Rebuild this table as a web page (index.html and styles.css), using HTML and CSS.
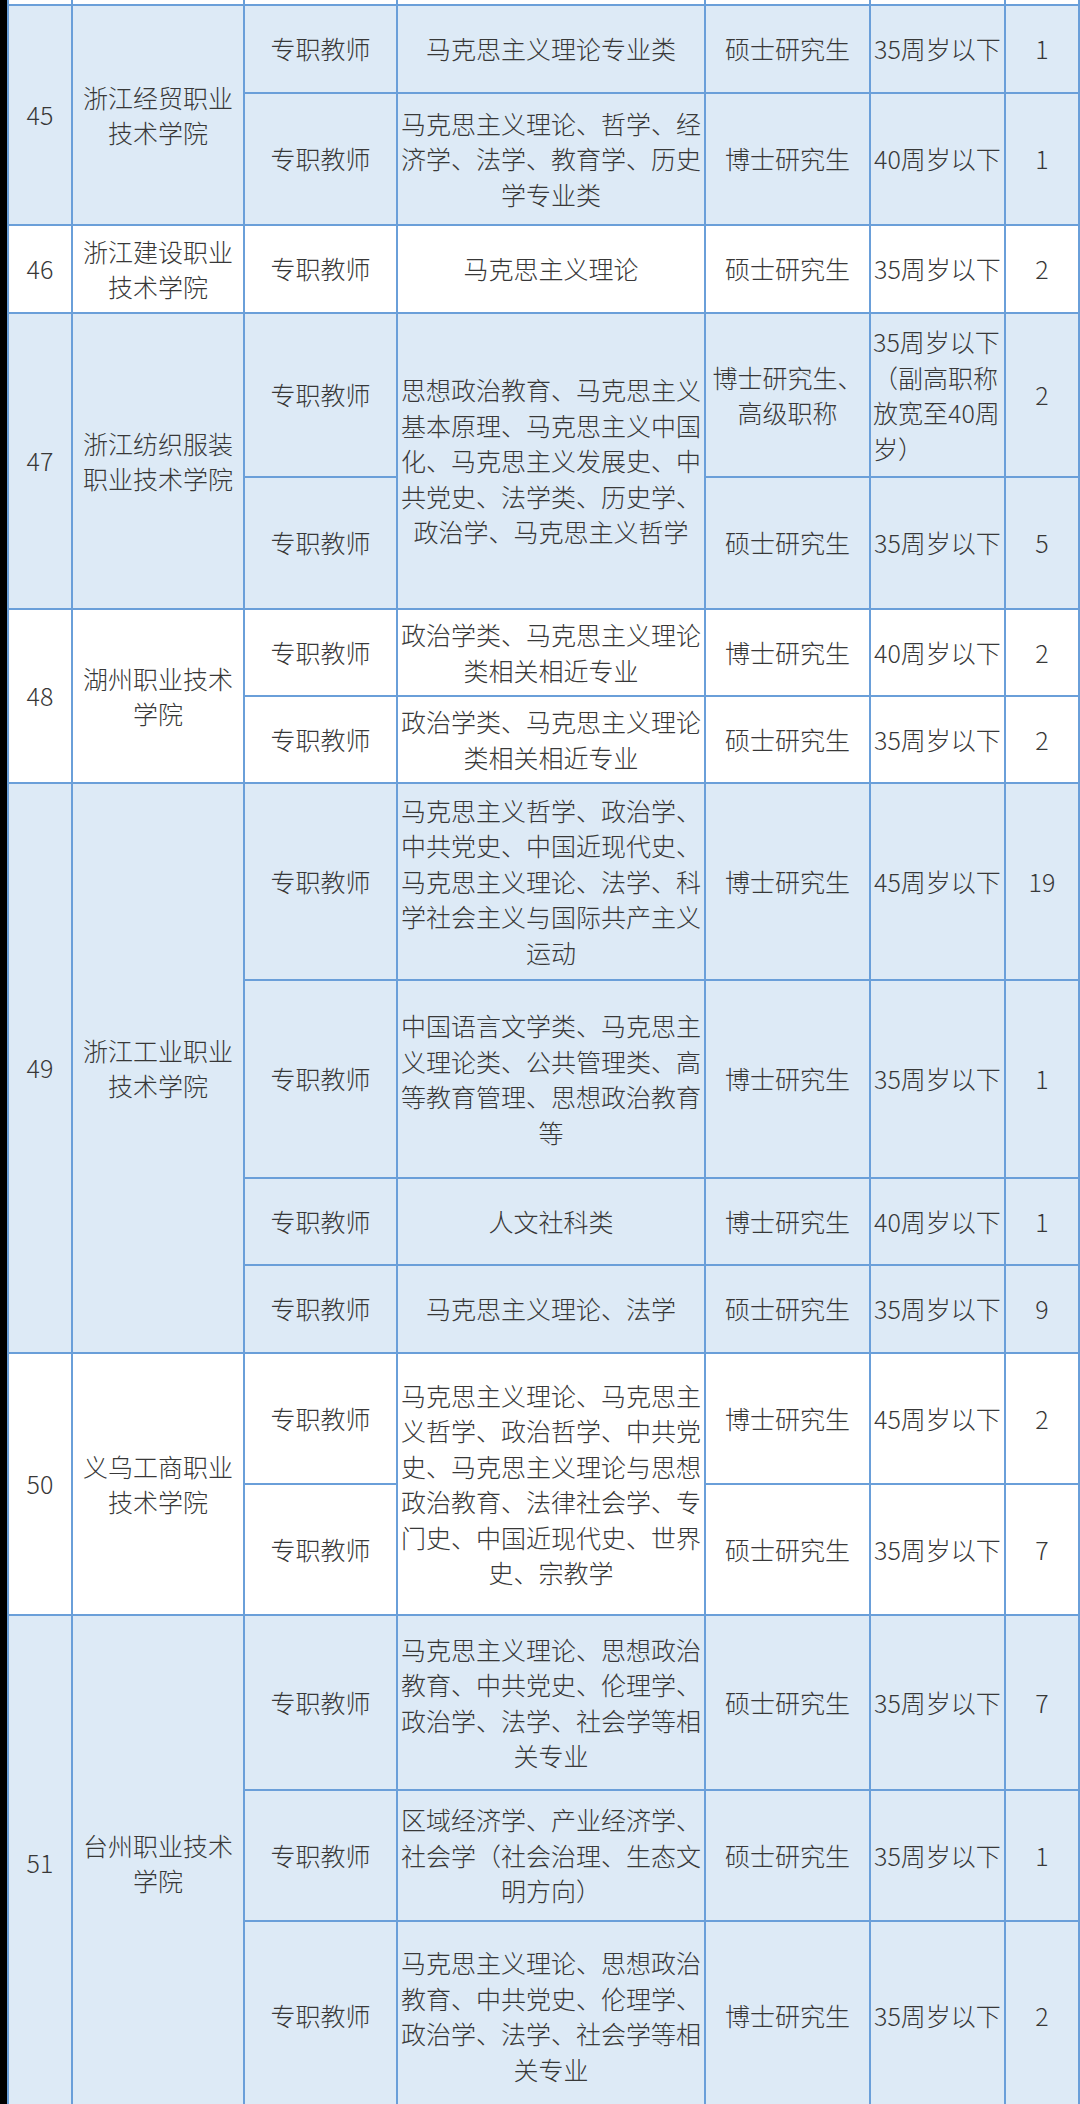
FILE: index.html
```html
<!DOCTYPE html>
<html lang="zh-CN">
<head>
<meta charset="utf-8">
<title>招聘岗位表</title>
<link rel="stylesheet" href="styles.css">
</head>
<body>
<div class="sheet">
  <div class="grid">
    <!-- tail of row 44 -->
    <div class="c w"></div><div class="c w"></div><div class="c w"></div><div class="c w"></div><div class="c w"></div><div class="c w"></div><div class="c w"></div>

    <!-- 45 -->
    <div class="c b r2">45</div>
    <div class="c b r2">浙江经贸职业技术学院</div>
    <div class="c b">专职教师</div>
    <div class="c b">马克思主义理论专业类</div>
    <div class="c b">硕士研究生</div>
    <div class="c b age">35周岁以下</div>
    <div class="c b">1</div>
    <div class="c b">专职教师</div>
    <div class="c b">马克思主义理论、哲学、经济学、法学、教育学、历史学专业类</div>
    <div class="c b">博士研究生</div>
    <div class="c b age">40周岁以下</div>
    <div class="c b">1</div>

    <!-- 46 -->
    <div class="c w">46</div>
    <div class="c w">浙江建设职业技术学院</div>
    <div class="c w">专职教师</div>
    <div class="c w">马克思主义理论</div>
    <div class="c w">硕士研究生</div>
    <div class="c w age">35周岁以下</div>
    <div class="c w">2</div>

    <!-- 47 -->
    <div class="c b r2">47</div>
    <div class="c b r2">浙江纺织服装职业技术学院</div>
    <div class="c b">专职教师</div>
    <div class="c b r2">思想政治教育、马克思主义基本原理、马克思主义中国化、马克思主义发展史、中共党史、法学类、历史学、政治学、马克思主义哲学</div>
    <div class="c b">博士研究生、高级职称</div>
    <div class="c b age left">35周岁以下（副高职称放宽至40周岁）</div>
    <div class="c b">2</div>
    <div class="c b">专职教师</div>
    <div class="c b">硕士研究生</div>
    <div class="c b age">35周岁以下</div>
    <div class="c b">5</div>

    <!-- 48 -->
    <div class="c w r2">48</div>
    <div class="c w r2">湖州职业技术学院</div>
    <div class="c w">专职教师</div>
    <div class="c w">政治学类、马克思主义理论类相关相近专业</div>
    <div class="c w">博士研究生</div>
    <div class="c w age">40周岁以下</div>
    <div class="c w">2</div>
    <div class="c w">专职教师</div>
    <div class="c w">政治学类、马克思主义理论类相关相近专业</div>
    <div class="c w">硕士研究生</div>
    <div class="c w age">35周岁以下</div>
    <div class="c w">2</div>

    <!-- 49 -->
    <div class="c b r4">49</div>
    <div class="c b r4">浙江工业职业技术学院</div>
    <div class="c b">专职教师</div>
    <div class="c b">马克思主义哲学、政治学、中共党史、中国近现代史、马克思主义理论、法学、科学社会主义与国际共产主义运动</div>
    <div class="c b">博士研究生</div>
    <div class="c b age">45周岁以下</div>
    <div class="c b">19</div>
    <div class="c b">专职教师</div>
    <div class="c b">中国语言文学类、马克思主义理论类、公共管理类、高等教育管理、思想政治教育等</div>
    <div class="c b">博士研究生</div>
    <div class="c b age">35周岁以下</div>
    <div class="c b">1</div>
    <div class="c b">专职教师</div>
    <div class="c b">人文社科类</div>
    <div class="c b">博士研究生</div>
    <div class="c b age">40周岁以下</div>
    <div class="c b">1</div>
    <div class="c b">专职教师</div>
    <div class="c b">马克思主义理论、法学</div>
    <div class="c b">硕士研究生</div>
    <div class="c b age">35周岁以下</div>
    <div class="c b">9</div>

    <!-- 50 -->
    <div class="c w r2">50</div>
    <div class="c w r2">义乌工商职业技术学院</div>
    <div class="c w">专职教师</div>
    <div class="c w r2">马克思主义理论、马克思主义哲学、政治哲学、中共党史、马克思主义理论与思想政治教育、法律社会学、专门史、中国近现代史、世界史、宗教学</div>
    <div class="c w">博士研究生</div>
    <div class="c w age">45周岁以下</div>
    <div class="c w">2</div>
    <div class="c w">专职教师</div>
    <div class="c w">硕士研究生</div>
    <div class="c w age">35周岁以下</div>
    <div class="c w">7</div>

    <!-- 51 -->
    <div class="c b r3">51</div>
    <div class="c b r3">台州职业技术学院</div>
    <div class="c b">专职教师</div>
    <div class="c b">马克思主义理论、思想政治教育、中共党史、伦理学、政治学、法学、社会学等相关专业</div>
    <div class="c b">硕士研究生</div>
    <div class="c b age">35周岁以下</div>
    <div class="c b">7</div>
    <div class="c b">专职教师</div>
    <div class="c b">区域经济学、产业经济学、社会学（社会治理、生态文明方向）</div>
    <div class="c b">硕士研究生</div>
    <div class="c b age">35周岁以下</div>
    <div class="c b">1</div>
    <div class="c b">专职教师</div>
    <div class="c b">马克思主义理论、思想政治教育、中共党史、伦理学、政治学、法学、社会学等相关专业</div>
    <div class="c b">博士研究生</div>
    <div class="c b age">35周岁以下</div>
    <div class="c b">2</div>
  </div>
</div>
</body>
</html>
```

FILE: styles.css
```css
html, body {
  margin: 0;
  padding: 0;
}

body {
  background: #000;
  font-family: "Noto Sans CJK SC", "Noto Sans", sans-serif;
  font-size: 25px;
  font-weight: 300;
  line-height: 35.5px;
  color: #383838;
}

.sheet {
  padding-left: 7px;
}

.grid {
  display: grid;
  background: #6a9fd9;
  gap: 2px;
  padding: 0 2px 2px 2px;
  grid-template-columns: 62px 170px 151px 306px 163px 133px 72px;
  grid-template-rows:
    4px 86px 130px 86px 162px 130px 85px 85px
    195px 196px 85px 86px 129px 129px 173px 129px 188px;
}

.c {
  display: flex;
  align-items: center;
  justify-content: center;
  text-align: center;
  padding: 0 2px;
  overflow: hidden;
  min-width: 0;
}

.b {
  background: #ddeaf6;
}

.w {
  background: #ffffff;
}

.r2 { grid-row: span 2; }
.r3 { grid-row: span 3; }
.r4 { grid-row: span 4; }

.age {
  padding: 0 2px;
}

.left {
  justify-content: flex-start;
  text-align: left;
}
```
